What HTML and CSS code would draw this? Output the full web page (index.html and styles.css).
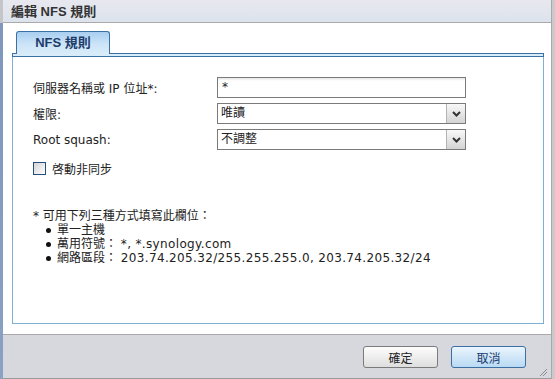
FILE: index.html
```html
<!DOCTYPE html>
<html lang="zh-Hant">
<head>
<meta charset="utf-8">
<title>編輯 NFS 規則</title>
<link rel="stylesheet" href="styles.css">
</head>
<body>
<div class="screen">
  <div class="edge-left"></div>
  <div class="window">
    <div class="titlebar">編輯 NFS 規則</div>
    <div class="content">
      <div class="tabs"><div class="tab">NFS 規則</div></div>
      <div class="strip"></div>
      <div class="panel">
        <div class="form">
          <label class="lbl">伺服器名稱或 IP 位址*:</label>
          <div class="input">*</div>
          <label class="lbl">權限:</label>
          <div class="select"><span class="val">唯讀</span><span class="arrow"><svg width="9" height="6" viewBox="0 0 9 6"><path d="M1 1 L4.5 4.5 L8 1" fill="none" stroke="#333" stroke-width="2"/></svg></span></div>
          <label class="lbl">Root squash:</label>
          <div class="select"><span class="val">不調整</span><span class="arrow"><svg width="9" height="6" viewBox="0 0 9 6"><path d="M1 1 L4.5 4.5 L8 1" fill="none" stroke="#333" stroke-width="2"/></svg></span></div>
        </div>
        <div class="check"><span class="box"></span><span class="check-label">啓動非同步</span></div>
        <div class="note">
          <p class="note-head">* 可用下列三種方式填寫此欄位：</p>
          <ul class="note-list">
            <li>單一主機</li>
            <li>萬用符號： <span class="latin">*, *.synology.com</span></li>
            <li>網路區段： <span class="latin">203.74.205.32/255.255.255.0, 203.74.205.32/24</span></li>
          </ul>
        </div>
      </div>
    </div>
    <div class="footer">
      <button class="btn">確定</button>
      <button class="btn primary">取消</button>
      <svg class="grip" width="9" height="9" viewBox="0 0 9 9"><path d="M8 1 L1 8 M8 4 L4 8" stroke="#8a8a8a" stroke-width="1"/></svg>
    </div>
  </div>
  <div class="edge-right"></div>
</div>
</body>
</html>
```
FILE: styles.css
```css
body {
  margin: 0;
  width: 555px;
  height: 379px;
  overflow: hidden;
  font-family: "DejaVu Sans", "Noto Sans CJK TC", sans-serif;
  font-size: 12px;
  color: #222;
}
.screen {
  display: flex;
  height: 379px;
}
.edge-left {
  width: 3px;
  background: linear-gradient(#c6c6ca 0, #c6c6ca 23px, #7e97bb 23px, #8aa1c2 100%);
}
.edge-right {
  width: 4px;
  box-sizing: border-box;
  border-left: 1px solid #a9a9a9;
  background: #cacaca;
}
.window {
  width: 548px;
  display: flex;
  flex-direction: column;
}
.titlebar {
  height: 22px;
  border-bottom: 1px solid #a9aaa9;
  background: linear-gradient(#e8e8ef, #dce3ec);
  padding-left: 8px;
  font: bold 13px "Liberation Sans", "Noto Sans CJK TC", sans-serif;
  line-height: 23px;
  color: #333;
}
.content {
  height: 311px;
  box-sizing: border-box;
  padding: 8px 7px 10px 9px;
  background: #fff;
  display: flex;
  flex-direction: column;
}
.tabs {
  display: flex;
  height: 22px;
}
.tab {
  position: relative;
  z-index: 1;
  margin-left: 4px;
  width: 94px;
  height: 23px;
  box-sizing: border-box;
  border: 1px solid #3a70a2;
  border-bottom: none;
  border-radius: 3px 3px 0 0;
  background: linear-gradient(#a8cef0, #cfe6f8 60%, #d8ebf8);
  text-align: center;
  font: bold 13px "Liberation Sans", "Noto Sans CJK TC", sans-serif;
  line-height: 22px;
  color: #1d3b6b;
}
.strip {
  height: 4px;
  box-sizing: border-box;
  border: 1px solid #3a70a2;
  background: #d8ebf8;
}
.panel {
  flex: 1;
  border: 1px solid #7eb0d6;
  border-top: none;
  padding: 20px 0 0 20px;
}
.form {
  display: grid;
  grid-template-columns: 184px 249px;
  grid-auto-rows: 21px;
  row-gap: 5px;
  align-items: center;
}
.lbl {
  color: #222;
}
.input {
  height: 21px;
  box-sizing: border-box;
  border: 1px solid #7a7a7a;
  background: linear-gradient(#e6e6e6, #ffffff 3px);
  padding-left: 4px;
  line-height: 19px;
}
.select {
  height: 21px;
  box-sizing: border-box;
  border: 1px solid #7a7a7a;
  background: #fff;
  display: flex;
}
.select .val {
  flex: 1;
  padding-left: 3px;
  line-height: 19px;
}
.arrow {
  width: 18px;
  border-left: 1px solid #b4b4b4;
  background: linear-gradient(#f8f8f8, #d4d4d4);
  display: flex;
  align-items: center;
  justify-content: center;
}
.check {
  display: flex;
  align-items: center;
  margin-top: 12px;
  height: 13px;
}
.box {
  width: 13px;
  height: 13px;
  box-sizing: border-box;
  border: 1px solid #234f83;
  background: linear-gradient(135deg, #d4d4d4, #ffffff);
}
.check-label {
  margin-left: 6px;
}
.note {
  margin-top: 34px;
  line-height: 14px;
}
.note-head {
  margin: 0;
}
.note-list {
  margin: 0;
  padding-left: 13px;
  list-style: none;
}
.note-list li {
  display: flex;
  align-items: center;
  white-space: pre;
}
.note-list li::before {
  content: "";
  width: 5px;
  height: 5px;
  border-radius: 50%;
  background: #111;
  margin-right: 6px;
}
.latin {
  letter-spacing: 0.35px;
}
.footer {
  position: relative;
  height: 45px;
  border-top: 1px solid #a9a9a9;
  border-bottom: 1px solid #9a9a9a;
  background: #d7d7de;
  display: flex;
  justify-content: flex-end;
  align-items: flex-start;
  gap: 13px;
  padding: 11px 25px 0 0;
  box-sizing: border-box;
}
.btn {
  width: 75px;
  height: 22px;
  margin: 0;
  padding: 0;
  border: 1px solid #7b7b7b;
  border-radius: 3px;
  background: linear-gradient(#fdfdfd, #dedede);
  font: 12px "DejaVu Sans", "Noto Sans CJK TC", sans-serif;
  color: #222;
}
.btn.primary {
  border-color: #3b6fa3;
  background: linear-gradient(#eaf5fd, #b8d9f3);
  color: #1a3d70;
}
.grip {
  position: absolute;
  right: 3px;
  bottom: 1px;
}
```
